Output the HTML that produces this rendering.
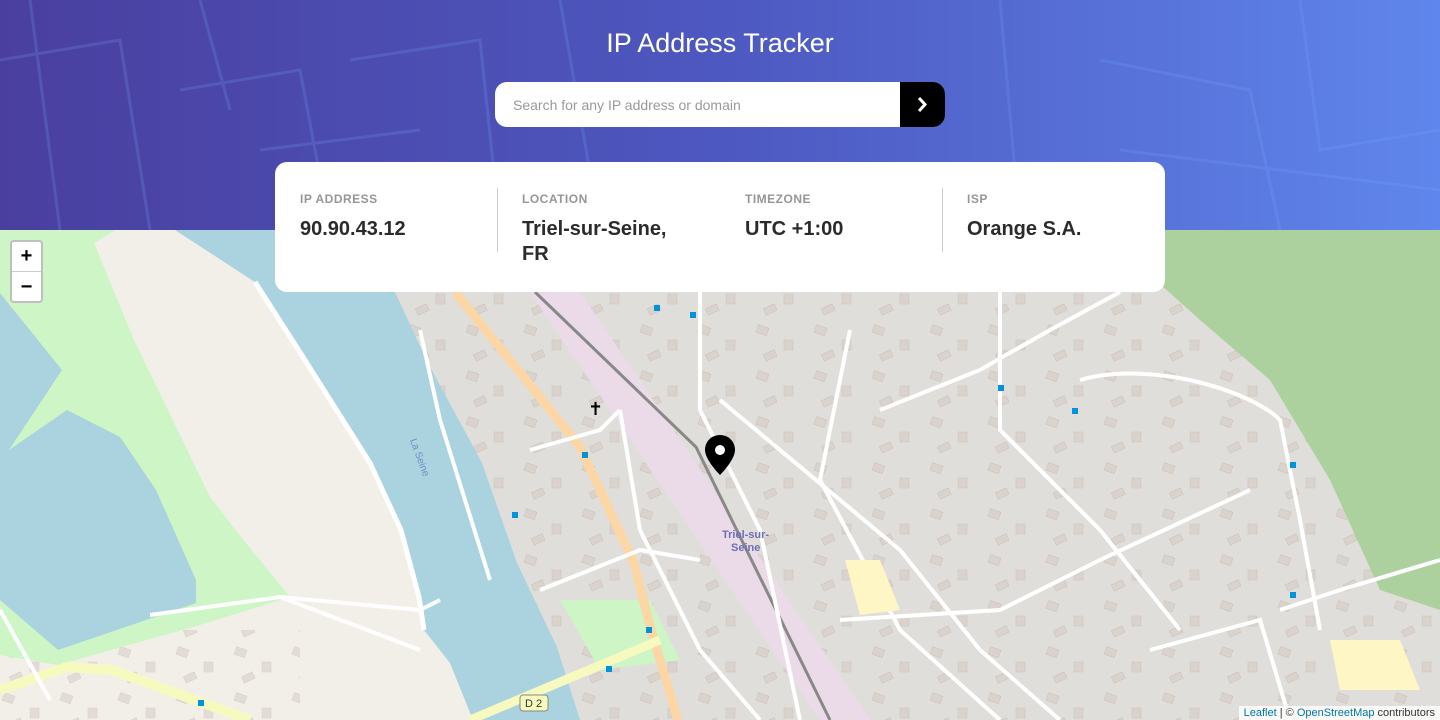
<!DOCTYPE html>
<html><head><meta charset="utf-8"><style>
*{margin:0;padding:0;box-sizing:border-box}
body{width:1440px;height:720px;overflow:hidden;font-family:"Liberation Sans",sans-serif;position:relative;background:#e0dedb}
.hdr{position:absolute;left:0;top:0;width:1440px;height:230px;background:linear-gradient(90deg,#4a3f9f 0%,#4d58c0 50%,#5f86ec 100%);overflow:hidden}
h1{position:absolute;top:28px;width:100%;text-align:center;color:#fff;font-size:27px;font-weight:normal}
.search{position:absolute;left:495px;top:82px;width:450px;height:45px;background:#fff;border-radius:12px;overflow:hidden}
.search span{position:absolute;left:18px;top:15px;color:#999;font-size:14px}
.search .btn{position:absolute;right:0;top:0;width:45px;height:45px;background:#000}
.card{position:absolute;left:275px;top:162px;width:890px;height:130px;background:#fff;border-radius:12px;z-index:5}
.col{position:absolute;top:30px}
.col .l{font-size:12px;font-weight:bold;color:#969696;letter-spacing:.5px}
.col .v{font-size:20px;font-weight:bold;color:#2b2b2b;margin-top:11px;line-height:25px}
.sep{position:absolute;top:26px;width:1px;height:64px;background:#ccc}
.zoom{position:absolute;left:10px;top:240px;width:33px;height:63px;background:#fff;border:2px solid rgba(0,0,0,.25);border-radius:4px;z-index:4;text-align:center;font-size:20px;line-height:29px;font-weight:bold;color:#000}
.attr{position:absolute;right:0;bottom:0;background:rgba(255,255,255,.8);font-size:11px;padding:1px 5px;color:#333}
.attr b{color:#0078a8;font-weight:normal}
</style></head><body>
<svg style="position:absolute;left:0;top:0" width="1440" height="720">
<defs>
<pattern id="bld" width="58" height="46" patternUnits="userSpaceOnUse">
<rect x="3" y="4" width="11" height="8" fill="#d9d0c9" stroke="#c4b6ab" stroke-width=".5" transform="rotate(20 8 8)"/>
<rect x="30" y="18" width="9" height="10" fill="#d9d0c9" stroke="#c4b6ab" stroke-width=".5"/>
<rect x="10" y="30" width="12" height="7" fill="#d9d0c9" stroke="#c4b6ab" stroke-width=".5" transform="rotate(-25 16 33)"/>
</pattern>
</defs>
<rect y="230" width="1440" height="490" fill="#e0dedb"/>
<rect x="380" y="230" width="1060" height="490" fill="url(#bld)" opacity=".8"/>
<polygon points="0,230 175,230 255,282 303,357 370,463 401,530 419,597 424,630 450,663 473,720 0,720" fill="#f2efe9"/>
<rect x="0" y="630" width="300" height="90" fill="url(#bld)" opacity=".6"/>
<polygon points="0,230 116,230 94,243 134,340 210,497 241,537 290,597 200,625 58,665 0,655" fill="#cdf5c5"/>
<polygon points="0,293 62,370 9,450 67,410 120,437 156,490 196,580 196,603 58,650 0,600" fill="#aad3df"/>
<polygon points="175,230 380,230 395,292 428,363 482,463 517,563 557,647 580,720 473,720 450,663 424,630 419,597 401,530 370,463 303,357 255,282" fill="#aad3df"/>
<polygon points="1100,230 1440,230 1440,610 1380,590 1330,480 1270,380 1200,320" fill="#add19e"/>
<polygon points="560,600 650,600 680,660 600,670" fill="#cdf5c5"/>
<polygon points="530,292 580,292 870,720 820,720" fill="#ebdbe8"/>
<path d="M255,282 L303,357 L370,463 L401,530 L419,597 L424,630" stroke="#fff" stroke-width="5" fill="none"/>
<path d="M420,330 L440,420 L465,500 L490,580" stroke="#fff" stroke-width="4" fill="none"/>
<path d="M455,292 L580,447 L634,563 L651,630 L678,720" stroke="#fcd6a4" stroke-width="9" fill="none"/>
<path d="M0,690 L67,667 L112,670 L250,720" stroke="#f7fabf" stroke-width="10" fill="none"/>
<path d="M470,720 L660,640" stroke="#f7fabf" stroke-width="9" fill="none"/>
<path d="M535,292 L696,447 L830,720" stroke="#888" stroke-width="3" fill="none"/>
<g stroke="#fff" stroke-width="4" fill="none">
<path d="M150,615 L280,597 L420,610 L440,600"/>
<path d="M280,597 L420,650"/>
<path d="M700,292 L700,410 L760,530 L800,720"/>
<path d="M620,410 L640,530 L700,650 L760,720"/>
<path d="M720,400 L900,550 L980,650 L1060,720"/>
<path d="M840,620 L1000,610 L1100,560 L1250,490"/>
<path d="M850,330 L820,480 L900,630 L1000,720"/>
<path d="M1080,380 C1150,360 1250,390 1280,420 L1300,520 L1320,630"/>
<path d="M1000,292 L1000,430 L1100,530 L1180,630"/>
<path d="M880,410 L980,370 L1050,330 L1120,292"/>
<path d="M1280,610 L1340,590 L1440,560"/>
<path d="M1150,650 L1260,620 L1290,720"/>
<path d="M530,450 L600,430 L620,410"/>
<path d="M540,590 L640,550 L700,560"/>
<path d="M0,610 L50,700"/>
</g>
<polygon points="1330,640 1400,640 1420,690 1340,690" fill="#fff6c6"/>
<polygon points="845,560 880,560 900,610 860,615" fill="#fff6c6"/>
<g fill="#0092da"><rect x="654" y="305" width="6" height="6"/><rect x="690" y="312" width="6" height="6"/><rect x="998" y="385" width="6" height="6"/><rect x="1072" y="408" width="6" height="6"/><rect x="1290" y="462" width="6" height="6"/><rect x="582" y="452" width="6" height="6"/><rect x="512" y="512" width="6" height="6"/><rect x="646" y="627" width="6" height="6"/><rect x="606" y="666" width="6" height="6"/><rect x="198" y="700" width="6" height="6"/><rect x="1290" y="592" width="6" height="6"/></g>
<text x="588" y="415" font-size="18" fill="#000">✝</text>
<path d="M720,435 c-9,0 -15,7 -15,15 c0,10 15,25 15,25 c0,0 15,-15 15,-25 c0,-8 -6,-15 -15,-15z" fill="#000"/>
<circle cx="720" cy="450" r="5" fill="#fff"/>
<text x="722" y="538" font-size="11" font-weight="bold" fill="#6f6fb3">Triel-sur-</text>
<text x="731" y="551" font-size="11" font-weight="bold" fill="#6f6fb3">Seine</text>
<text x="410" y="440" font-size="10" fill="#6a8fc5" transform="rotate(70 410 440)">La Seine</text>
<rect x="520" y="695" width="28" height="16" rx="3" fill="#f7fabf" stroke="#888"/>
<text x="525" y="707" font-size="11" fill="#333">D 2</text>
</svg>
<div class="hdr">
<svg width="1440" height="230" style="position:absolute;left:0;top:0" fill="none" stroke="rgba(120,170,255,.2)" stroke-width="3">
<path d="M0,60 L120,40 L150,230 M30,0 L60,230 M180,90 L300,70 L330,230 M200,0 L230,110 M350,60 L480,40 L500,230 M560,0 L600,230 M1000,0 L1020,230 M1100,60 L1250,90 L1280,230 M1300,0 L1320,150 L1440,130 M1120,150 L1440,190 M260,150 L420,130"/>
</svg>
<h1>IP Address Tracker</h1>
<div class="search"><span>Search for any IP address or domain</span><div class="btn"><svg width="45" height="45"><path d="M19,16 L25,22.5 L19,29" stroke="#fff" stroke-width="3" fill="none"/></svg></div></div>
</div>
<div class="card">
<div class="col" style="left:25px"><div class="l">IP ADDRESS</div><div class="v">90.90.43.12</div></div>
<div class="sep" style="left:222px"></div>
<div class="col" style="left:247px"><div class="l">LOCATION</div><div class="v">Triel-sur-Seine,<br>FR</div></div>
<div class="col" style="left:470px"><div class="l">TIMEZONE</div><div class="v">UTC +1:00</div></div>
<div class="sep" style="left:667px"></div>
<div class="col" style="left:692px"><div class="l">ISP</div><div class="v">Orange S.A.</div></div>
</div>
<div class="zoom">+<div style="border-top:1px solid #ccc;line-height:30px">−</div></div>
<div class="attr"><b>Leaflet</b> | © <b>OpenStreetMap</b> contributors</div>
</body></html>
